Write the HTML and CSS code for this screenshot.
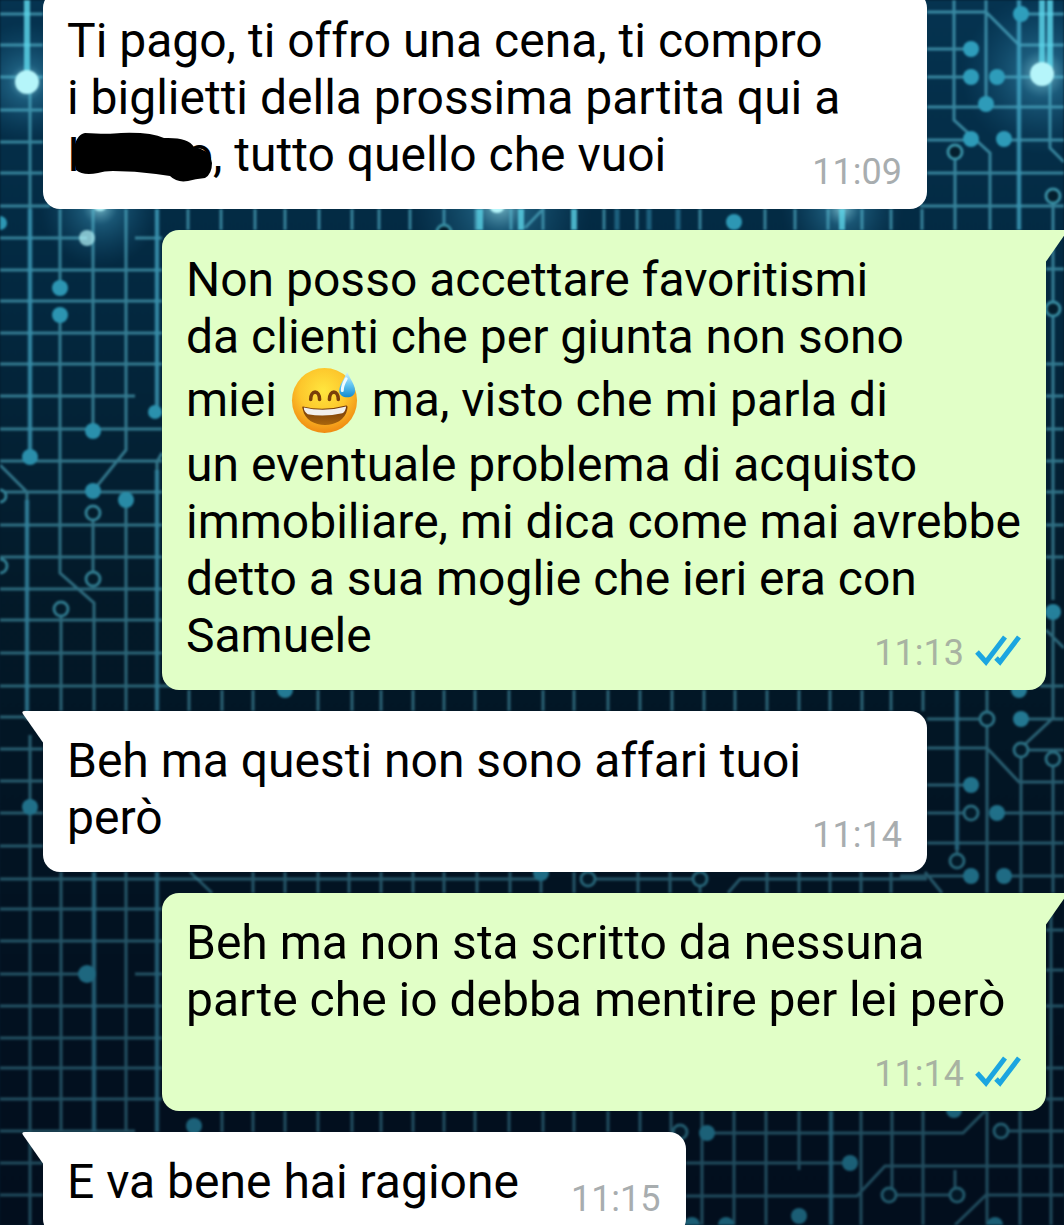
FILE: index.html
```html
<!DOCTYPE html>
<html lang="it">
  <head>
    <meta charset="UTF-8" />
    <meta name="viewport" content="width=device-width, initial-scale=1.0" />
    <title>Chat</title>
    <link rel="stylesheet" href="styles.css">
  </head>
  <body>
    <svg class="wallpaper" viewBox="0 0 1064 1225" preserveAspectRatio="xMinYMin slice" aria-hidden="true">
      <defs>
        <linearGradient id="base" x1="0" y1="0" x2="0" y2="1">
          <stop offset="0" stop-color="#053350" />
          <stop offset="0.25" stop-color="#032a42" />
          <stop offset="0.5" stop-color="#031c2b" />
          <stop offset="1" stop-color="#020f1e" />
        </linearGradient>
        <linearGradient id="shade" x1="0" y1="0" x2="0" y2="1">
          <stop offset="0" stop-color="#020d1c" stop-opacity="0" />
          <stop offset="0.35" stop-color="#020d1c" stop-opacity="0.1" />
          <stop offset="0.7" stop-color="#020d1c" stop-opacity="0.35" />
          <stop offset="1" stop-color="#020d1c" stop-opacity="0.45" />
        </linearGradient>
        <radialGradient id="glow">
          <stop offset="0" stop-color="#a8f4ff" stop-opacity="0.75" />
          <stop offset="0.3" stop-color="#3c9cc4" stop-opacity="0.4" />
          <stop offset="1" stop-color="#1c6c98" stop-opacity="0" />
        </radialGradient>
      </defs>
      <rect width="1064" height="1225" fill="url(#base)" />

      <g fill="url(#glow)">
        <circle cx="27" cy="82" r="60" />
        <circle cx="100" cy="207" r="60" />
        <circle cx="500" cy="205" r="90" />
        <circle cx="842" cy="208" r="60" />
        <circle cx="1042" cy="74" r="80" />
      </g>

      <!-- left side -->
      <g class="trace">
        <path d="M0 14H43M0 45H43M0 77H43M0 110H43M0 142H43M0 173H43M0 206H50M0 238H87M135 238H162M0 270H162M0 301H162M0 333H162M0 364H162M0 396H135M0 429H162M0 461H162M0 492H162M0 525H162M0 557H162M0 589H162M0 620H162M0 653H162M0 686H175M0 717H43M0 749H43M0 781H43M0 813H43M0 846H43" />
        <path d="M0 879H200M0 909H162M0 941H162M0 974H87M135 974H162M0 1006H162M0 1038H162M0 1068H162M0 1099H162M0 1131H135M0 1163H43M0 1195H43" />
        <path d="M30 82V457M60 209V288M60 315V573L94 603V711M93 209V430M126 209V450L93 491M157 209V412M162 453L157 462V711M0 465L27 492V720M93 520V572M61 616V711M126 500V711" />
        <path d="M30 735V1225M61 872V1132M94 872V1132M126 872V1132M157 872V1132" />
      </g>

      <!-- gaps between the messages -->
      <g class="trace">
        <path d="M188 209V230M221 209V230M255 209V230M285 209V230M319 209V230M352 209V230M379 209V230M410 209V230M444 209V225M476 209V230M511 209V230M525 228L543 209V230M604 209V230M637 209V230M700 209V230M765 209V230M795 209V230M828 209V230M862 209V230M891 209V230M922 209V230" />
        <path d="M189 690V711M222 690V711M253 690V711M318 690V711M352 690V711M381 690V711M413 690V711M444 690V711M475 690V711M509 690V711M543 690V711M574 690V711M608 690V711M640 690V711M672 690V711M704 690V711M735 690V711M767 690V711M799 690V711M830 690V711M862 690V711M891 690V711" />
        <path d="M190 872L212 893M200 879H541M596 879H692M728 893L740 879H927M253 872V893M285 872V893M318 872V893M349 872V893M381 872V893M413 872V893M444 872V893M477 872V893M510 872V893M541 872V893M574 872V893M638 872V893M670 872V893M700 886V893M767 872V893M799 872V893M830 872V893M861 872V893M891 872V893" />
        <path d="M222 1111V1132M253 1111V1132M285 1111V1132M318 1111V1132M352 1111V1132M381 1111V1132M413 1111V1132M444 1111V1132M475 1111V1132M509 1111V1132M543 1111V1132M574 1111V1132M608 1111V1132M640 1111V1132M671 1111V1132" />
      </g>

      <!-- right side -->
      <g class="trace">
        <path d="M927 12H986L1019 45H1064M954 0V120L990 153V230M986 0V104M1019 0V230M955 159V230M1050 74V148L1064 162M927 49H971M927 77H971M997 77H1064M927 107H1064M927 140H971M1004 140H1064M927 173H1064M920 206H1064M1021 14H1064M1053 203V301M1053 316V600M1046 269H1064M1046 364H1064M1046 396H1064M1046 429H1064M1046 461H1064M1046 492H1064M1046 525H1064M1046 557H1064" />
        <path d="M1053 612V718L1021 748V893M1046 630L1064 648M1040 686H1064M927 719H980M1021 719H1064M927 748H987L1019 782H1064M1028 750H1064M927 785H971M927 813H964M997 813H1064M927 843H1064M900 876H971M1004 876H1064M923 690V711M957 690V853M987 690V893M1053 766V893M925 872L942 893M1046 930H1064M1046 970H1064M1046 1006H1064M1046 1068H1064M1046 1099H1064M1051 905V1225" />
        <path d="M707 1133H963L985 1111M1008 1131H1064M686 1163H850M686 1196H857L885 1166H1064M896 1195H950M955 1225L986 1195H1064M702 1111V1225M734 1111V1225M766 1111V1225M799 1111V1170M831 1111V1225M861 1111V1225M892 1111V1188M923 1111V1225M955 1170V1188M987 1111V1225M1020 1111V1225" />
      </g>

      <g class="bright">
        <path d="M27 0V82M1042 0V74M1050 0V74M480 209V230M521 209V230M574 209V230M842 209V230" />
      </g>
      <g class="wide">
        <path d="M617 209V230M649 209V230M678 209V230M94 872V1132M157 872V1132M157 470V711M157 209V412M30 209V457M27 500V711M957 690V850M831 1111V1225M1019 0V230" />
      </g>

      <g class="dots">
        <circle cx="0" cy="223" r="7" /><circle cx="60" cy="288" r="8" /><circle cx="60" cy="315" r="8" />
        <circle cx="93" cy="431" r="8" /><circle cx="155" cy="412" r="7" /><circle cx="30" cy="457" r="8" />
        <circle cx="93" cy="491" r="8" /><circle cx="126" cy="500" r="8" /><circle cx="30" cy="807" r="8" />
        <circle cx="87" cy="974" r="9" /><circle cx="734" cy="222" r="8" /><circle cx="285" cy="690" r="8" />
        <circle cx="541" cy="873" r="8" /><circle cx="194" cy="1126" r="8" /><circle cx="971" cy="49" r="8" />
        <circle cx="971" cy="77" r="8" /><circle cx="997" cy="77" r="8" /><circle cx="986" cy="104" r="8" />
        <circle cx="971" cy="139" r="8" /><circle cx="1004" cy="139" r="8" /><circle cx="1021" cy="14" r="8" />
        <circle cx="1053" cy="612" r="8" /><circle cx="1019" cy="690" r="8" /><circle cx="1021" cy="719" r="8" />
        <circle cx="971" cy="785" r="8" /><circle cx="997" cy="813" r="8" /><circle cx="971" cy="876" r="8" />
        <circle cx="1004" cy="876" r="8" /><circle cx="707" cy="1133" r="8" /><circle cx="954" cy="1110" r="8" />
        <circle cx="850" cy="1163" r="8" /><circle cx="799" cy="1216" r="8" /><circle cx="692" cy="1225" r="8" />
        <circle cx="726" cy="1225" r="8" /><circle cx="995" cy="1225" r="8" />
      </g>
      <g class="rings">
        <circle cx="0" cy="496" r="6" /><circle cx="0" cy="566" r="7" /><circle cx="93" cy="513" r="7" />
        <circle cx="93" cy="579" r="7" /><circle cx="61" cy="609" r="7" /><circle cx="444" cy="232" r="7" />
        <circle cx="588" cy="879" r="7" /><circle cx="700" cy="879" r="7" /><circle cx="955" cy="152" r="7" />
        <circle cx="1053" cy="196" r="7" /><circle cx="1053" cy="309" r="7" /><circle cx="987" cy="719" r="7" />
        <circle cx="1021" cy="750" r="7" /><circle cx="1053" cy="759" r="7" /><circle cx="971" cy="813" r="7" />
        <circle cx="957" cy="861" r="7" /><circle cx="680" cy="1132" r="7" /><circle cx="1001" cy="1131" r="7" />
        <circle cx="889" cy="1195" r="7" /><circle cx="957" cy="1195" r="7" />
      </g>
      <rect width="1064" height="1225" fill="url(#shade)" />
      <g fill="#b5f5fa">
        <circle cx="27" cy="82" r="12" />
        <circle cx="1042" cy="74" r="12" />
        <circle cx="87" cy="238" r="8" opacity="0.7" />
        <circle cx="100" cy="203" r="8" />
        <circle cx="497" cy="205" r="8" />
      </g>
    </svg>

    <!-- shared icons -->
    <svg class="sprite" aria-hidden="true">
      <symbol id="ticks" viewBox="0 0 46 32">
        <path d="M3 18L12 28L31 3M22 24L26 28L45 3" transform="translate(-1)" fill="none" stroke="#1ba5e0" stroke-width="5" />
      </symbol>
      <symbol id="tail" viewBox="0 0 22 33">
        <path d="M22 0H3Q-1 0 1 3L22 33Z" fill="currentColor" />
      </symbol>
    </svg>

    <main class="chat">
      <div class="message received">
        <p class="text">
          Ti pago, ti offro una cena, ti compro<br>
          i biglietti della prossima partita qui a<br>
          <span class="redacted"><span>I</span><span>o</span><svg class="scribble" viewBox="66 126 146 57" aria-hidden="true"><path d="M73 160C72 149 74 135 84 133C99 134 112 134 120 133Q150 132 163 138Q187 137 193 147L200 149Q210 153 211 163Q211 174 204 178Q194 179 187 181Q176 183 169 176L155 174Q134 171 112 171Q103 171 97 173Q82 176 75 170Z" /></svg></span>, tutto quello che vuoi
          <span class="meta"><time>11:09</time></span>
        </p>
      </div>

      <div class="message sent with-tail">
        <svg class="tail" aria-hidden="true"><use href="#tail" /></svg>
        <p class="text">
          Non posso accettare favoritismi<br>
          da clienti che per giunta non sono<br>
          miei
          <svg class="emoji" viewBox="0 0 72 72" role="img" aria-label="😅">
            <defs>
              <radialGradient id="face" cx="0.48" cy="0.35" r="0.65">
                <stop offset="0" stop-color="#ffe63e" />
                <stop offset="0.55" stop-color="#fdc72c" />
                <stop offset="1" stop-color="#f08a12" />
              </radialGradient>
              <linearGradient id="drop" x1="0" y1="0" x2="0" y2="1">
                <stop offset="0" stop-color="#d5f4ff" />
                <stop offset="0.5" stop-color="#63c5f2" />
                <stop offset="1" stop-color="#128bd0" />
              </linearGradient>
              <linearGradient id="mouth" x1="0" y1="0" x2="0" y2="1">
                <stop offset="0" stop-color="#6e3508" />
                <stop offset="1" stop-color="#a9650c" />
              </linearGradient>
            </defs>
            <circle cx="36" cy="36" r="33" fill="url(#face)" />
            <path d="M22 35C22 25 31 25 31 35M41 35C41 25 50 25 50 35" fill="none" stroke="#7a3f0a" stroke-width="3.6" stroke-linecap="round" />
            <path d="M14 42Q35 47 58 41Q60 41 59 45C55 66 18 66 14 45Q13 42 14 42Z" fill="url(#mouth)" />
            <path d="M15 43Q36 48 58 42Q57 48 54 49Q36 53 19 50Q15 47 15 43Z" fill="#f2f0ed" />
            <path d="M59 7C56 14 51 20 51 26C51 35 67 35 67 26C67 20 62 14 59 7Z" fill="url(#drop)" />
            <path d="M58 14Q54 21 54 26" fill="none" stroke="#effcff" stroke-width="3" stroke-linecap="round" />
          </svg>
          ma, visto che mi parla di<br>
          un eventuale problema di acquisto<br>
          immobiliare, mi dica come mai avrebbe<br>
          detto a sua moglie che ieri era con<br>
          Samuele
          <span class="meta"><time>11:13</time><svg class="ticks" role="img" aria-label="Letto"><use href="#ticks" /></svg></span>
        </p>
      </div>

      <div class="message received with-tail">
        <svg class="tail" aria-hidden="true"><use href="#tail" /></svg>
        <p class="text">
          Beh ma questi non sono affari tuoi<br>
          però
          <span class="meta"><time>11:14</time></span>
        </p>
      </div>

      <div class="message sent with-tail">
        <svg class="tail" aria-hidden="true"><use href="#tail" /></svg>
        <p class="text">
          Beh ma non sta scritto da nessuna<br>
          parte che io debba mentire per lei però
          <span class="meta"><time>11:14</time><svg class="ticks" role="img" aria-label="Letto"><use href="#ticks" /></svg></span>
        </p>
      </div>

      <div class="message received with-tail short">
        <svg class="tail" aria-hidden="true"><use href="#tail" /></svg>
        <p class="text">
          E va bene hai ragione
          <span class="meta"><time>11:15</time></span>
        </p>
      </div>
    </main>
  </body>
</html>
```

FILE: styles.css
```css
* {
  margin: 0;
  padding: 0;
  box-sizing: border-box;
}

body {
  height: 100vh;
  overflow: hidden;
  background-color: #03182a;
  font-family: Roboto, "Liberation Sans", sans-serif;
  color: #000;
}

/* circuit board wallpaper, behind the chat */
.wallpaper {
  position: fixed;
  inset: 0;
  width: 100%;
  height: 100%;
  z-index: -1;
  filter: blur(1px);
}

.trace {
  fill: none;
  stroke: #5cc3da;
  stroke-width: 3;
  opacity: 0.6;
}

.wide {
  fill: none;
  stroke: #3fa9cb;
  stroke-width: 5;
  opacity: 0.45;
}

.bright {
  fill: none;
  stroke: #5fdcf0;
  stroke-width: 6;
  opacity: 0.8;
}

.dots {
  fill: #2f9fbd;
}

.rings {
  fill: #04202f;
  stroke: #3a93a8;
  stroke-width: 3;
}

.sprite {
  position: absolute;
  width: 0;
  height: 0;
}

/* the list is scrolled a little past the top of the first message */
.chat {
  display: flex;
  flex-direction: column;
  gap: 21px;
  margin-top: -9px;
  padding: 0 18px 0 43px;
}

.message {
  position: relative;
  padding: 21px 18px 26px 24px;
  border-radius: 17px;
}

.received {
  margin-right: 119px;
  background-color: #fff;
  color: #fff;
}

.sent {
  margin-left: 119px;
  background-color: #e1ffc7;
  color: #e1ffc7;
}

.short {
  align-self: flex-start;
}

.received.with-tail {
  border-top-left-radius: 0;
}

.sent.with-tail {
  border-top-right-radius: 0;
}

.tail {
  position: absolute;
  top: 0;
  width: 22px;
  height: 33px;
}

.received .tail {
  left: -21px;
}

.sent .tail {
  right: -21px;
  transform: scaleX(-1);
}

.text {
  display: flow-root;
  font-size: 48px;
  line-height: 57px;
  color: #000;
}

/* drops to its own line when the last line of text is full */
.meta {
  float: right;
  display: flex;
  align-items: center;
  gap: 11px;
  height: 22px;
  margin: 35px 7px 0 52px;
  font-size: 36px;
  line-height: 22px;
  color: #a8adaf;
}

.sent .meta {
  color: #a8b3a2;
}

.ticks {
  width: 46px;
  height: 32px;
  margin-bottom: 6px;
}

.emoji {
  width: 71px;
  height: 71px;
  vertical-align: -20px;
}

.redacted {
  position: relative;
  display: inline-flex;
  justify-content: space-between;
  width: 146px;
}

.scribble {
  position: absolute;
  top: 0;
  left: 0;
  width: 146px;
  height: 57px;
}
```
